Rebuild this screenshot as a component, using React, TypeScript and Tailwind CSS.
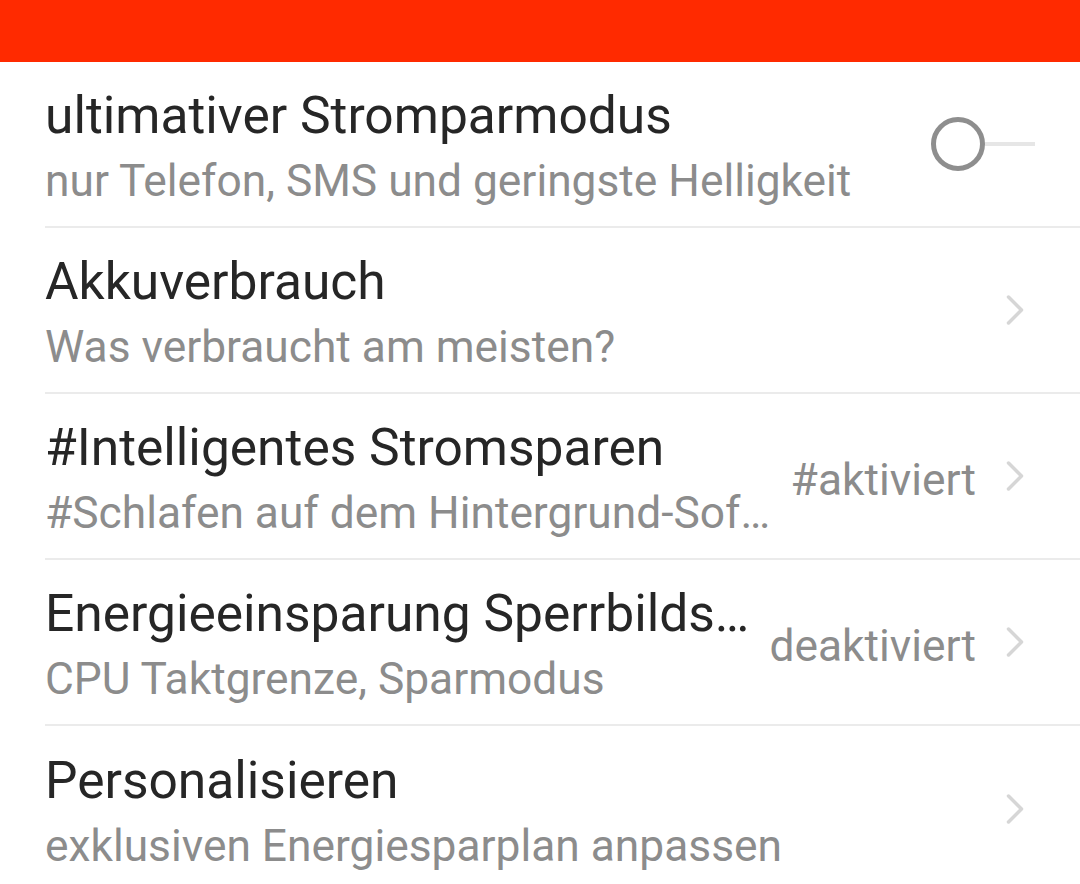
import React from "react";

type Row = {
  title: string;
  subtitle: string;
  value?: string;
  toggle?: boolean;
};

const rows: Row[] = [
  {
    title: "ultimativer Stromparmodus",
    subtitle: "nur Telefon, SMS und geringste Helligkeit",
    toggle: true,
  },
  { title: "Akkuverbrauch", subtitle: "Was verbraucht am meisten?" },
  {
    title: "#Intelligentes Stromsparen",
    subtitle: "#Schlafen auf dem Hintergrund-Software",
    value: "#aktiviert",
  },
  {
    title: "Energieeinsparung Sperrbildschirm",
    subtitle: "CPU Taktgrenze, Sparmodus",
    value: "deaktiviert",
  },
  { title: "Personalisieren", subtitle: "exklusiven Energiesparplan anpassen" },
];

const Chevron = () => (
  <svg width="18" height="32" viewBox="0 0 18 32" className="shrink-0">
    <path
      d="M2.5 3 L15.5 16 L2.5 29"
      fill="none"
      stroke="#d6d6d6"
      strokeWidth="3.5"
      strokeLinecap="round"
      strokeLinejoin="round"
    />
  </svg>
);

const Toggle = () => (
  <div className="flex items-center shrink-0 mr-[-11px]">
    <div className="w-[54px] h-[54px] rounded-full border-[5px] border-[#8e8e8e] bg-white" />
    <div className="w-[50px] h-[4px] bg-[#e6e6e6]" />
  </div>
);

const SettingRow: React.FC<{ row: Row; last: boolean }> = ({ row, last }) => (
  <div className="h-[166px] pl-[45px]">
    <div
      className={`h-full flex items-center pr-[56px] ${last ? "" : "border-b-2 border-[#ebebeb]"}`}
    >
      <div className="flex-1 min-w-0 pt-[10px]">
        <div className="truncate text-[51.5px] leading-[62px] text-[#262626]">{row.title}</div>
        <div className="truncate text-[44.3px] leading-[63px] pt-[3px] text-[#8c8c8c]">
          {row.subtitle}
        </div>
      </div>
      {row.value && (
        <div className="shrink-0 ml-[8px] text-[44.3px] leading-[52px] text-[#8c8c8c] pt-[7px]">
          {row.value}
        </div>
      )}
      {row.toggle ? (
        <Toggle />
      ) : (
        <div className="ml-[30px]">
          <Chevron />
        </div>
      )}
    </div>
  </div>
);

export default function App() {
  return (
    <div
      className="w-[1080px] h-[884px] bg-white overflow-hidden"
      style={{ fontFamily: "Roboto, 'Noto Sans', sans-serif" }}
    >
      <div className="h-[62px] bg-[#ff2a00]" />
      {rows.map((r, i) => (
        <SettingRow key={i} row={r} last={i === rows.length - 1} />
      ))}
    </div>
  );
}
